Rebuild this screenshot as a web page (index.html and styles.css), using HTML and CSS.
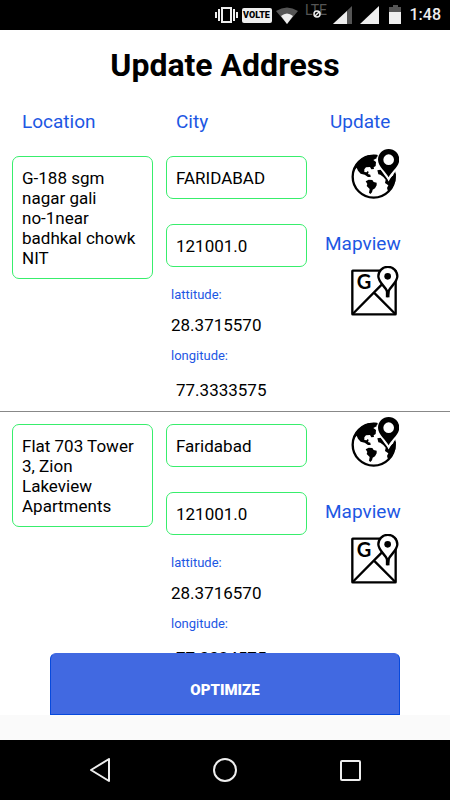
FILE: index.html
```html
<!DOCTYPE html>
<html lang="en">
<head>
<meta charset="utf-8">
<meta name="viewport" content="width=device-width, initial-scale=1">
<title>Update Address</title>
<link rel="stylesheet" href="styles.css">
</head>
<body>
<svg class="sprite" aria-hidden="true">
  <symbol id="globe" viewBox="33 27 144 150">
    <circle cx="101" cy="110" r="63" fill="#fff" stroke="#000" stroke-width="7"/>
    <path d="M39 96 L48 72 L64 56 L84 46 L110 44 L110 55 L100 60 L108 66 L107 78 L101 82 L102 87 L94 88 L90 81 L78 82 L73 88 L73 96 L80 97 L83 93 L86 96 L84 102 L91 104 L92 111 L84 111 L74 104 L62 101 L54 92 L50 83 Z"/>
    <path d="M77 124 L86 119 L97 120 L101 126 L110 128 L110 136 L105 145 L98 149 L96 157 L91 162 L87 158 L89 147 L80 138 L82 132 Z"/>
    <path d="M112 91 L122 89 L130 95 L138 109 L146 120 L154 110 L168 100 L166 124 L155 146 L144 154 L141 144 L145 136 L135 129 L137 119 L130 111 L121 104 L115 103 Z"/>
    <path d="M146 116 C139 102 115 83 115 58 A31 31 0 0 1 177 58 C177 83 154 102 146 116 Z" fill="#fff" stroke="#fff" stroke-width="8"/>
    <path fill-rule="evenodd" d="M146 112 C139 96 114 80 114 59 A32 32 0 0 1 178 59 C178 80 153 96 146 112 Z M162 59 A16 16 0 1 0 130 59 A16 16 0 1 0 162 59 Z"/>
  </symbol>
  <symbol id="map" viewBox="33 23 144 150">
    <g fill="none" stroke="#000" stroke-width="7" stroke-linejoin="round">
      <rect x="37" y="37" width="130" height="131" rx="1"/>
      <path d="M38 167 L134 70 M102 103 L166 167"/>
    </g>
    <path d="M143 113 L141 98 C136 85 115 72 115 54 A28.500 28.500 0 0 1 172 54 C172 72 151 85 146 98 Z" fill="#fff" stroke="#000" stroke-width="7" stroke-linejoin="round"/>
    <path d="M143 95 V117" stroke="#000" stroke-width="11"/>
    <circle cx="143" cy="54" r="10"/>
    <text class="map-letter" x="50" y="93">G</text>
  </symbol>
</svg>

<div class="screen">
  <header class="status">
    <svg width="23" height="30" viewBox="0 0 23 30" aria-hidden="true">
      <path fill="none" stroke="#eee" stroke-width="2" d="M7 8H16V22H7ZM4 9V21M19 9V21M1 12V18M22 12V18"/>
    </svg>
    <span class="volte">VOLTE</span>
    <svg width="22" height="30" viewBox="0 0 22 30" aria-hidden="true">
      <path fill="#555" d="M11 24 L0 11 Q11 4 22 11Z"/>
      <path fill="#eee" d="M11 24 L5 16 Q11 11 17 16Z"/>
    </svg>
    <svg width="27" height="30" viewBox="0 0 27 30" aria-hidden="true">
      <text class="lte" x="3" y="15">LTE</text>
      <circle cx="15" cy="14" r="3" fill="#000" stroke="#eee" stroke-width="1.500"/>
      <path stroke="#eee" stroke-width="1.500" d="M13 16L17 12"/>
    </svg>
    <svg width="19" height="30" viewBox="0 0 19 30" aria-hidden="true">
      <path fill="#555" d="M0 24L19 6V24Z"/><path fill="#eee" d="M0 24L14 11V24Z"/>
    </svg>
    <svg width="23" height="30" viewBox="0 0 23 30" aria-hidden="true">
      <path fill="#eee" d="M4 24L23 6V24Z"/>
    </svg>
    <svg width="19" height="30" viewBox="0 0 19 30" aria-hidden="true">
      <path fill="#555" d="M6 12V7H10V5H15V7H18V12Z"/><path fill="#eee" d="M6 12H18V24H6Z"/>
    </svg>
    <time class="clock">1:48</time>
  </header>

  <main class="page">
    <h1 class="title">Update Address</h1>
    <div class="columns heads">
      <span>Location</span><span>City</span><span>Update</span>
    </div>
    <div class="list">
      <section class="columns card">
        <textarea class="field" rows="5" aria-label="Location">G-188 sgm
nagar gali
no-1near
badhkal chowk
NIT</textarea>
        <div class="details">
          <input class="field" aria-label="City" value="FARIDABAD">
          <input class="field" aria-label="Postcode" value="121001.0">
          <label class="label" for="lat1">lattitude:</label>
          <input class="value" id="lat1" value="28.3715570">
          <label class="label" for="lon1">longitude:</label>
          <input class="value lon" id="lon1" value="77.3333575">
        </div>
        <div class="actions">
          <button class="icon" aria-label="Update"><svg><use href="#globe"/></svg></button>
          <span class="map-title">Mapview</span>
          <button class="icon" aria-label="Mapview"><svg><use href="#map"/></svg></button>
        </div>
      </section>
      <section class="columns card">
        <textarea class="field" rows="4" aria-label="Location">Flat 703 Tower 3, Zion Lakeview Apartments</textarea>
        <div class="details">
          <input class="field" aria-label="City" value="Faridabad">
          <input class="field" aria-label="Postcode" value="121001.0">
          <label class="label" for="lat2">lattitude:</label>
          <input class="value" id="lat2" value="28.3716570">
          <label class="label" for="lon2">longitude:</label>
          <input class="value lon" id="lon2" value="77.3324575">
        </div>
        <div class="actions">
          <button class="icon" aria-label="Update"><svg><use href="#globe"/></svg></button>
          <span class="map-title">Mapview</span>
          <button class="icon" aria-label="Mapview"><svg><use href="#map"/></svg></button>
        </div>
      </section>
    </div>
    <div class="footer"><button class="optimize">OPTIMIZE</button></div>
  </main>

  <nav class="nav">
    <button aria-label="Back"><svg width="24" height="24" viewBox="0 0 24 24"><path d="M21 1V23L3 12Z"/></svg></button>
    <button aria-label="Home"><svg width="24" height="24" viewBox="0 0 24 24"><circle cx="12" cy="12" r="11"/></svg></button>
    <button aria-label="Recent apps"><svg width="24" height="24" viewBox="0 0 24 24"><rect x="3" y="3" width="19" height="19" rx="1"/></svg></button>
  </nav>
</div>
</body>
</html>
```
FILE: styles.css
```css
* { box-sizing: border-box; }

body {
  margin: 0;
  font-family: Roboto, "Liberation Sans", sans-serif;
  font-size: 17px;
  line-height: 20px;
  color: #000;
  background: #fafafa;
}

button, input, textarea {
  margin: 0;
  padding: 0;
  border: 0;
  font: inherit;
  color: inherit;
  background: none;
}

svg { display: block; }

.sprite { display: none; }

.screen {
  display: flex;
  flex-direction: column;
  height: 100vh;
}

.status {
  display: flex;
  align-items: center;
  justify-content: flex-end;
  gap: 4px;
  height: 30px;
  padding-right: 9px;
  color: #eee;
  background: #000;
}

.volte {
  width: 30px;
  border-radius: 2px;
  font-size: 9px;
  font-weight: 900;
  line-height: 15px;
  text-align: center;
  color: #000;
  background: #eee;
}

.lte { font-size: 14px; fill: #555; }

.clock {
  margin-left: 4px;
  font-size: 16px;
  font-weight: 500;
}

.page {
  display: flex;
  flex: 1;
  flex-direction: column;
  min-height: 0;
  margin-bottom: 25px;
  background: #fff;
}

.title {
  margin: 16px 0 26px;
  font-size: 32px;
  font-weight: 700;
  line-height: 38px;
  text-align: center;
}

.columns {
  display: grid;
  grid-template-columns: 141fr 141fr 130fr;
  column-gap: 13px;
  align-items: start;
  padding-left: 12px;
}

.heads, .map-title {
  font-size: 19px;
  line-height: 24px;
  color: #1d57e3;
}

.heads { padding-bottom: 10px; }
.heads span { padding-left: 10px; }

.list {
  flex: 1;
  min-height: 0;
  overflow: hidden;
}

.card {
  padding-top: 12px;
  border-bottom: 1px solid #888;
}

.field {
  display: block;
  width: 100%;
  padding: 11px 9px 10px;
  border: 1px solid #38ee6c;
  border-radius: 7px;
  resize: none;
  overflow: hidden;
}

.details {
  display: flex;
  flex-direction: column;
  align-items: flex-start;
  padding-bottom: 11px;
}

.details .field { height: 43px; margin-bottom: 25px; }
.details .field + .field { margin-bottom: 20px; }

.label {
  padding-left: 5px;
  font-size: 13px;
  line-height: 16px;
  color: #1d57e3;
}

.value {
  width: 100%;
  height: 20px;
  margin: 12px 0 13px;
  padding-left: 5px;
}

.value.lon {
  margin: 16px 0 0;
  padding-left: 10px;
}

.actions {
  display: flex;
  flex-direction: column;
  align-items: flex-start;
  margin-top: -7px;
}

.icon { margin-left: 31px; cursor: pointer; }
.icon svg { width: 48px; height: 50px; }

.map-title { margin: 33px 0 10px 5px; }

.map-letter {
  font-family: Lato, sans-serif;
  font-size: 60px;
  font-weight: 700;
}

.footer { padding: 0 50px; }

.optimize {
  display: block;
  width: 100%;
  padding: 26px 0 14px;
  border: 1px solid #0649dd;
  border-top-color: #4169e1;
  border-radius: 6px 6px 0 0;
  font-size: 15px;
  font-weight: 900;
  color: #fff;
  background: #4169e1;
}

.nav {
  display: flex;
  align-items: center;
  justify-content: center;
  gap: 101px;
  height: 60px;
  background: #000;
}

.nav svg { fill: none; stroke: #eee; stroke-width: 2; stroke-linejoin: round; }
```
